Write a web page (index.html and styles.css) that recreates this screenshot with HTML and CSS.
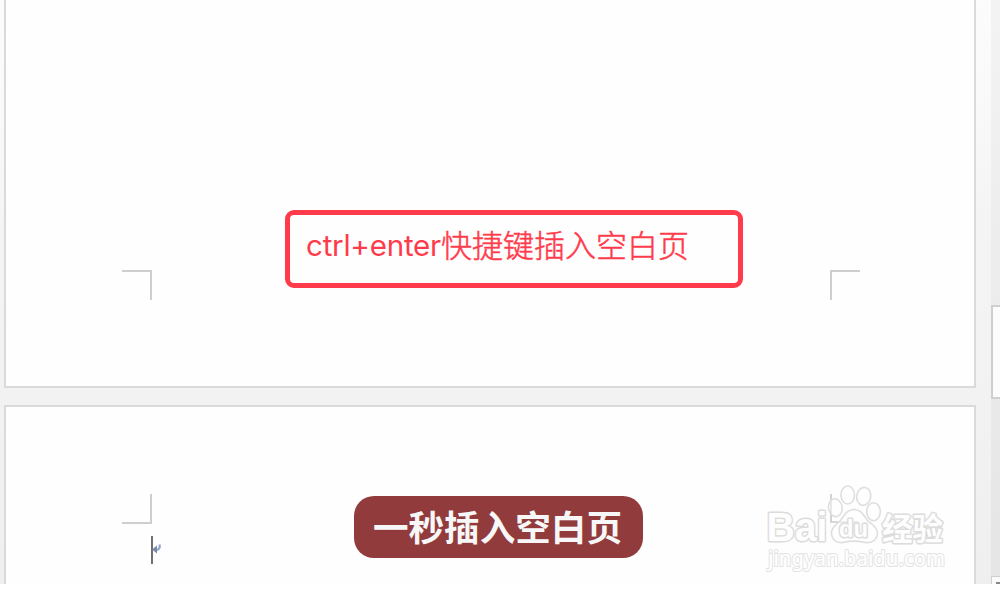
FILE: index.html
```html
<!DOCTYPE html>
<html lang="zh-CN">
<head>
<meta charset="utf-8">
<title>插入空白页</title>
<link rel="stylesheet" href="styles.css">
</head>
<body>
<main class="workspace">
  <div class="pages">
    <section class="page page-first">
      <div class="callout"><span class="latin">ctrl+enter</span><span class="cjk">快捷键插入空白页</span></div>
      <div class="marks">
        <i class="mark mark-top mark-right"></i>
        <i class="mark mark-top mark-left"></i>
      </div>
    </section>
    <section class="page page-second">
      <div class="insertion">
        <i class="mark mark-bottom mark-right"></i>
        <svg class="cursor" width="12" height="30" viewBox="0 0 12 30">
          <path d="M2 1v28" stroke="#606060" stroke-width="1.800"/>
          <path d="M9.500 9.500c1 3.500-.5 5.500-4.500 5.500" fill="none" stroke="#8fa3c8" stroke-width="2.200"/>
          <path d="M2 14.500l5-4v8z" fill="#7d8aa5"/>
        </svg>
      </div>
      <div class="caption">一秒插入空白页</div>
    </section>
  </div>
  <aside class="scrollbar">
    <div class="thumb"></div>
    <div class="scroll-button"><i></i></div>
  </aside>
</main>
<svg class="watermark" width="200" height="110" viewBox="0 0 200 110">
  <path d="M69 14v28h28" fill="none" stroke="#cccccc" stroke-width="1.700"/>
  <g class="logo-shape">
    <ellipse cx="85.700" cy="15" rx="6.800" ry="9"/>
    <ellipse cx="101.700" cy="16.300" rx="7" ry="9" transform="rotate(10 101.700 16.300)"/>
    <ellipse cx="73.300" cy="27.700" rx="6.800" ry="9" transform="rotate(-8 73.300 27.700)"/>
    <ellipse cx="111.500" cy="31.700" rx="6.800" ry="9"/>
    <path d="M92 29.500c-8 0-10 7-14 11.500-5 4-9.500 8-8.500 13 1 7 6 9 11.500 8.500 8-2 14-2 22 0 6 .5 11.500-1.500 12.500-8.500 0-6-4.500-9-9.500-13-4-4.500-6-11.500-14-11.500z"/>
  </g>
  <g class="logo-text">
    <text class="brand" x="4.500" y="61" textLength="61" lengthAdjust="spacingAndGlyphs">Bai</text>
    <text class="du" x="77" y="57" textLength="29" lengthAdjust="spacingAndGlyphs">du</text>
    <text class="name" x="120" y="59.500" textLength="61" lengthAdjust="spacingAndGlyphs">经验</text>
    <text class="site" x="6" y="86" textLength="177" lengthAdjust="spacingAndGlyphs">jingyan.baidu.com</text>
  </g>
</svg>
</body>
</html>
```
FILE: styles.css
```css
* { box-sizing: border-box; }
body { margin: 0; width: 1000px; height: 593px; overflow: hidden; background: #fff; }
.workspace {
  display: flex;
  justify-content: space-between;
  height: 584px;
  overflow: hidden;
  background: linear-gradient(#fcfcfc 0, #f9f9f9 110px, #f4f4f4 230px, #f2f2f2 400px, #efefef 584px);
}
.pages { display: flex; flex-direction: column; gap: 17px; padding-left: 4px; }
.page { width: 972px; background: #fefefe; border: 2px solid #dadada; }
.page-first { height: 388px; border-top: 0; padding-top: 210px; }
.page-second {
  height: 179px;
  border-bottom: 0;
  padding: 87px 0 0 116px;
  display: flex;
  align-items: flex-start;
}
.callout {
  width: 458px;
  height: 78px;
  margin-left: 279px;
  padding: 0 0 9px 16px;
  border: 5px solid #ff3b4b;
  border-radius: 9px;
  display: flex;
  align-items: center;
  color: #ff3b4b;
  line-height: 40px;
  white-space: nowrap;
}
.latin { width: 135px; padding-top: 1px; font: 400 29.6px/40px Inter, sans-serif; letter-spacing: -.25px; }
.cjk { padding-bottom: 2px; font: 300 31px/40px "Noto Sans CJK SC", sans-serif; -webkit-text-stroke: .5px #ff3b4b; }
.marks { display: flex; justify-content: space-between; width: 738px; margin: -18px 0 0 116px; }
.mark { display: block; width: 30px; height: 30px; border: 0 solid #cecece; }
.mark-top { border-top-width: 2px; }
.mark-bottom { border-bottom-width: 2px; }
.mark-left { border-left-width: 2px; }
.mark-right { border-right-width: 2px; }
.insertion { width: 50px; }
.cursor { display: block; margin: 11px 0 0 28px; }
.caption {
  width: 289px;
  height: 62px;
  margin: 2px 0 0 182px;
  padding-right: 2px;
  border-radius: 20px;
  background: #923b3d;
  color: #f7f7f7;
  font: 700 35.6px/60px "Noto Sans CJK SC", sans-serif;
  text-align: center;
  white-space: nowrap;
}
.scrollbar {
  width: 9px;
  height: 584px;
  display: flex;
  flex-direction: column;
  padding-top: 305px;
  background: linear-gradient(#f3f3f3, #ececec 300px, #e5e5e5);
}
.thumb { height: 94px; border: 2px solid #cfcfcf; border-right: 0; background: #fcfcfc; }
.scroll-button { height: 8px; margin-top: auto; border: 1px solid #cfcfcf; border-width: 1px 0 0 1px; background: #fafafa; padding: 5px 0 0 4px; }
.scroll-button i { display: block; height: 2px; background: #888; }
.watermark { position: absolute; left: 762px; top: 480px; }
.logo-shape { fill: #fefefe; fill-opacity: .5; stroke: #dedede; stroke-width: 1.6; }
.logo-text { fill: #fefefe; stroke: #dcdcdc; stroke-width: 3; stroke-linejoin: round; paint-order: stroke; }
.brand { font: 700 41px "Liberation Sans", sans-serif; }
.du { font: 700 23px "Liberation Sans", sans-serif; }
.name { font: 700 31px "Noto Sans CJK SC", sans-serif; }
.site { font: 500 21.5px "Noto Sans", sans-serif; stroke: #e3e3e3; stroke-width: 2; }
```
